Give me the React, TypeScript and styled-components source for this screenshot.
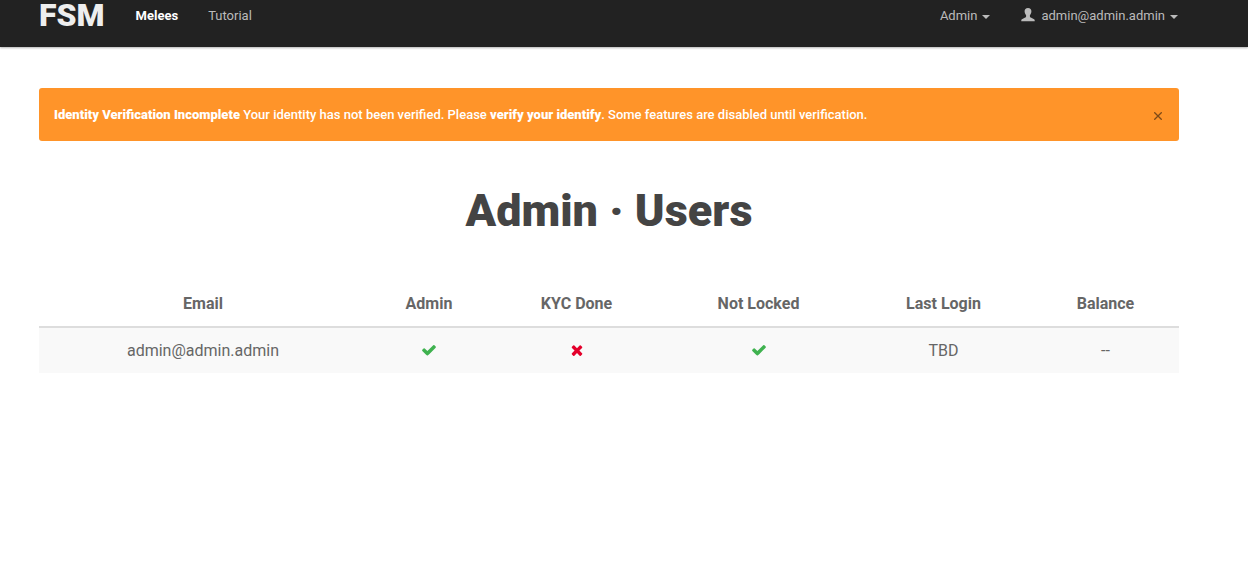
import React from "react";
import styled, { createGlobalStyle } from "styled-components";

const GlobalStyle = createGlobalStyle`
  * { box-sizing: border-box; }
  body {
    margin: 0;
    background: #fff;
    color: #666;
    font-family: Roboto, "Liberation Sans", sans-serif;
    font-size: 16px;
    line-height: 22px;
  }
`;

const NavBar = styled.nav`
  display: flex;
  align-items: flex-start;
  padding: 0 69px 15px 39px;
  background: #222;
  box-shadow: 0 1px 2px rgba(0, 0, 0, 0.3);
`;

const Brand = styled.a`
  margin-right: 31px;
  color: #eee;
  font-size: 32px;
  font-weight: 900;
  line-height: 30px;
  text-decoration: none;
`;

const NavGroup = styled.div<{ $end?: boolean }>`
  display: flex;
  gap: 30px;
  margin-left: ${(p) => (p.$end ? "auto" : "0")};
`;

const NavLink = styled.a<{ $active?: boolean }>`
  color: ${(p) => (p.$active ? "#fff" : "#bbb")};
  font-size: 13px;
  font-weight: ${(p) => (p.$active ? 700 : 400)};
  line-height: 32px;
  text-decoration: none;
`;

const MenuButton = styled.button`
  display: flex;
  align-items: center;
  padding: 0;
  border: 0;
  background: none;
  color: #bbb;
  font: inherit;
  font-size: 13px;
  line-height: 32px;
  cursor: pointer;
`;

const Caret = styled.span`
  margin: 2px 1px 0 5px;
  border: 4px solid transparent;
  border-top-color: currentColor;
  border-bottom: 0;
`;

const UserGlyph = styled.svg`
  width: 14px;
  height: 14px;
  margin: 0 6px 2px 0;
  fill: currentColor;
`;

const Main = styled.main`
  padding: 41px 69px 0 39px;
`;

const Alert = styled.div`
  display: flex;
  align-items: center;
  min-height: 53px;
  padding: 15px;
  border-radius: 3px;
  background: #ff9429;
  color: #fff;
  font-size: 13px;
  font-weight: 500;
`;

const AlertText = styled.p`
  flex: 1;
  margin: 0;
`;

const AlertStrong = styled.strong`
  font-weight: 900;
`;

const AlertLink = styled.a`
  color: #fff;
  font-weight: 900;
  text-decoration: none;
`;

const CloseButton = styled.button`
  display: flex;
  padding: 2px;
  margin-top: 3px;
  border: 0;
  background: none;
  color: #7d4a17;
  cursor: pointer;
`;

const Title = styled.h1`
  margin: 45px 0;
  color: #444;
  font-size: 45px;
  font-weight: 900;
  line-height: 50px;
  text-align: center;
`;

const Table = styled.table`
  width: 100%;
  table-layout: fixed;
  border-collapse: collapse;
  text-align: center;
`;

const Column = styled.col<{ $width: number }>`
  width: ${(p) => p.$width}px;
`;

const HeadCell = styled.th`
  padding: 12px 8px 11px;
  border-bottom: 2px solid #ddd;
  font-weight: 700;
`;

const BodyRow = styled.tr`
  background: #f9f9f9;
`;

const Cell = styled.td`
  padding: 12px 8px 11px;
`;

const Mark = styled.svg<{ $on: boolean }>`
  display: block;
  width: 16px;
  height: 16px;
  margin: 0 auto 2px;
  fill: ${(p) => (p.$on ? "#3fb24f" : "#e4002b")};
`;

const CHECK =
  "M1671 566q0 40-28 68l-724 724-136 136q-28 28-68 28t-68-28l-136-136-362-362q-28-28-28-68t28-68l136-136q28-28 68-28t68 28l294 295 656-657q28-28 68-28t68 28l136 136q28 28 28 68z";
const CROSS =
  "M1490 1322q0 40-28 68l-136 136q-28 28-68 28t-68-28l-294-294-294 294q-28 28-68 28t-68-28l-136-136q-28-28-28-68t28-68l294-294-294-294q-28-28-28-68t28-68l136-136q28-28 68-28t68 28l294 294 294-294q28-28 68-28t68 28l136 136q28 28 28 68t-28 68l-294 294 294 294q28 28 28 68z";

function Flag({ on }: { on: boolean }) {
  return (
    <Mark $on={on} viewBox="0 0 1792 1792" role="img" aria-label={on ? "Yes" : "No"}>
      <path d={on ? CHECK : CROSS} />
    </Mark>
  );
}

const columns = [
  { label: "Email", width: 328 },
  { label: "Admin", width: 124 },
  { label: "KYC Done", width: 171 },
  { label: "Not Locked", width: 193 },
  { label: "Last Login", width: 177 },
  { label: "Balance", width: 147 },
];

const users = [
  { email: "admin@admin.admin", admin: true, kyc: false, unlocked: true, login: "TBD", balance: "--" },
];

export default function App() {
  return (
    <>
      <GlobalStyle />
      <NavBar>
        <Brand href="#">FSM</Brand>
        <NavGroup>
          <NavLink href="#melees" $active>Melees</NavLink>
          <NavLink href="#tutorial">Tutorial</NavLink>
        </NavGroup>
        <NavGroup $end>
          <MenuButton>Admin<Caret /></MenuButton>
          <MenuButton>
            <UserGlyph viewBox="0 0 14 14" aria-hidden="true">
              <path d="M7 0C4.700 0 3.600 1.400 3.600 3.300C3.600 4.700 4.100 6.200 5.100 7.200V8.400C5.100 9 4.800 9.300 4.200 9.600L1.400 10.900C.5 11.300.3 11.800.3 12.500V13.200H13.700V12.500C13.700 11.800 13.500 11.300 12.600 10.900L9.800 9.600C9.200 9.300 8.900 9 8.900 8.400V7.200C9.900 6.200 10.400 4.700 10.400 3.300C10.400 1.400 9.300 0 7 0Z" />
            </UserGlyph>
            admin@admin.admin<Caret />
          </MenuButton>
        </NavGroup>
      </NavBar>
      <Main>
        <Alert role="alert">
          <AlertText>
            <AlertStrong>Identity Verification Incomplete</AlertStrong> Your identity has not been verified. Please{" "}
            <AlertLink href="#verify">verify your identify</AlertLink>. Some features are disabled until verification.
          </AlertText>
          <CloseButton aria-label="Close">
            <svg width="8" height="8" viewBox="0 0 8 8" fill="none" stroke="currentColor" strokeWidth="1.3" aria-hidden="true">
              <path d="M.3.3L7.700 7.700M7.700.3L.3 7.700" />
            </svg>
          </CloseButton>
        </Alert>
        <Title>Admin · Users</Title>
        <Table>
          <colgroup>
            {columns.map((c) => <Column key={c.label} $width={c.width} />)}
          </colgroup>
          <thead>
            <tr>{columns.map((c) => <HeadCell key={c.label} scope="col">{c.label}</HeadCell>)}</tr>
          </thead>
          <tbody>
            {users.map((u) => (
              <BodyRow key={u.email}>
                <Cell>{u.email}</Cell>
                <Cell><Flag on={u.admin} /></Cell>
                <Cell><Flag on={u.kyc} /></Cell>
                <Cell><Flag on={u.unlocked} /></Cell>
                <Cell>{u.login}</Cell>
                <Cell>{u.balance}</Cell>
              </BodyRow>
            ))}
          </tbody>
        </Table>
      </Main>
    </>
  );
}
